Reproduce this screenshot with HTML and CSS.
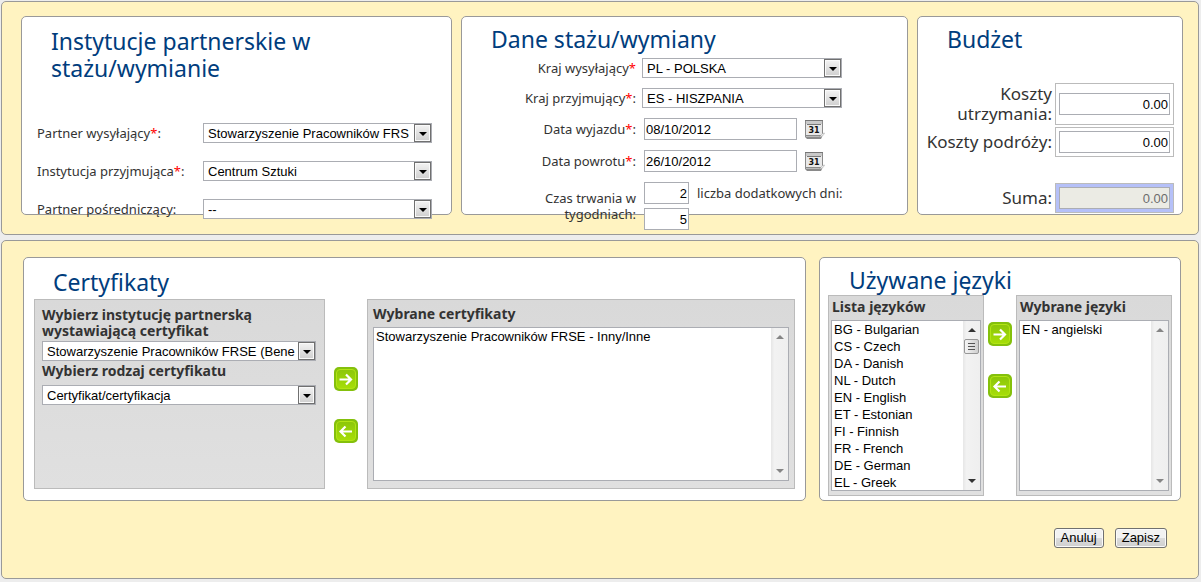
FILE: index.html
```html
<!DOCTYPE html>
<html lang="pl">
<head>
<meta charset="utf-8">
<title>Staż / wymiana</title>
<link rel="stylesheet" href="styles.css">
</head>
<body>
<svg class="defs" aria-hidden="true">
  <defs>
    <linearGradient id="green" x1="0" y1="0" x2="0" y2="1">
      <stop offset="0" stop-color="#8cc60a"/><stop offset="1" stop-color="#a6de08"/>
    </linearGradient>
    <symbol id="tile" viewBox="0 0 24 24">
      <rect width="24" height="24" rx="5" fill="#84c00c"/>
      <rect x="2.5" y="2.5" width="19" height="19" rx="3.5" fill="url(#green)" stroke="#b2e414"/>
    </symbol>
    <symbol id="right" viewBox="0 0 24 24">
      <use href="#tile"/>
      <path d="M5.5 12.5H17M12 7.5l5 5-5 5" fill="none" stroke="#fff" stroke-width="2.2"/>
    </symbol>
    <symbol id="left" viewBox="0 0 24 24">
      <use href="#tile"/>
      <path d="M18 12.5H6.5M11.500 7.500l-5 5 5 5" fill="none" stroke="#fff" stroke-width="2.2"/>
    </symbol>
    <symbol id="calendar" viewBox="0 0 20 19">
      <path d="M0 0h18v13l-1 4-1 2H2l-2-2z" fill="#8a8a8a"/>
      <path d="M1 1h16v14H1z" fill="#e9e9e9"/>
      <path d="M1 1h16v3H1z" fill="#c9c9c9"/>
      <path d="M0 0h18v1H0zM2 4h14v1H2z" fill="#777"/>
      <path d="M1 16h15v1H1z" fill="#bbb"/>
      <path d="M14 17c2 0 2-4 5.500-4-1 2-2 4-5.500 4z" fill="#f4f4f4" stroke="#999" stroke-width=".5"/>
      <text x="9" y="13" class="cal-day">31</text>
    </symbol>
    <symbol id="up" viewBox="0 0 8 4"><path d="M0 4l4-4 4 4z" fill="currentColor"/></symbol>
    <symbol id="down" viewBox="0 0 8 4"><path d="M0 0l4 4 4-4z" fill="currentColor"/></symbol>
  </defs>
</svg>

<form class="page">
  <section class="panel panel-top">
    <div class="card">
      <h2 class="title">Instytucje partnerskie w stażu/wymianie</h2>
      <div class="partners">
        <label for="p1">Partner wysyłający<b class="req">*</b>:</label>
        <span class="select"><select id="p1"><option>Stowarzyszenie Pracowników FRS</option></select></span>
        <label for="p2">Instytucja przyjmująca<b class="req">*</b>:</label>
        <span class="select"><select id="p2"><option>Centrum Sztuki</option></select></span>
        <label for="p3">Partner pośredniczący:</label>
        <span class="select"><select id="p3"><option>--</option></select></span>
      </div>
    </div>

    <div class="card card-raised">
      <h2 class="title">Dane stażu/wymiany</h2>
      <div class="details">
        <div class="row"><label for="k1">Kraj wysyłający<b class="req">*</b></label>
          <span class="select country"><select id="k1"><option>PL - POLSKA</option></select></span></div>
        <div class="row"><label for="k2">Kraj przyjmujący<b class="req">*</b>:</label>
          <span class="select country"><select id="k2"><option>ES - HISZPANIA</option></select></span></div>
        <div class="row"><label for="d1">Data wyjazdu<b class="req">*</b>:</label>
          <span class="field"><input class="date" id="d1" value="08/10/2012">
          <button type="button" class="icon-btn" aria-label="Kalendarz wyjazdu"><svg width="20" height="19"><use href="#calendar"/></svg></button></span></div>
        <div class="row"><label for="d2">Data powrotu<b class="req">*</b>:</label>
          <span class="field"><input class="date" id="d2" value="26/10/2012">
          <button type="button" class="icon-btn" aria-label="Kalendarz powrotu"><svg width="20" height="19"><use href="#calendar"/></svg></button></span></div>
        <div class="row"><label for="w1">Czas trwania w tygodniach:</label>
          <span class="duration"><input class="num" id="w1" value="2">
          <label for="w2">liczba dodatkowych dni:</label><input class="num" id="w2" value="5"></span></div>
      </div>
    </div>

    <div class="card card-raised">
      <h2 class="title">Budżet</h2>
      <div class="budget">
        <label for="b1">Koszty utrzymania:</label>
        <span class="money"><input id="b1" value="0.00"></span>
        <label for="b2">Koszty podróży:</label>
        <span class="money"><input id="b2" value="0.00"></span>
        <label for="b3" class="sum">Suma:</label>
        <span class="money money-sum sum"><input id="b3" value="0.00" disabled></span>
      </div>
    </div>
  </section>

  <section class="panel panel-bottom">
    <div class="lower">
      <div class="card">
        <h2 class="title">Certyfikaty</h2>
        <div class="certs">
          <div class="box picker">
            <label for="c1">Wybierz instytucję partnerską wystawiającą certyfikat</label>
            <span class="select"><select id="c1"><option>Stowarzyszenie Pracowników FRSE (Bene</option></select></span>
            <label for="c2">Wybierz rodzaj certyfikatu</label>
            <span class="select second"><select id="c2"><option>Certyfikat/certyfikacja</option></select></span>
          </div>
          <div class="arrows arrows-low">
            <button type="button" class="icon-btn" aria-label="Dodaj certyfikat"><svg width="24" height="24"><use href="#right"/></svg></button>
            <button type="button" class="icon-btn" aria-label="Usuń certyfikat"><svg width="24" height="24"><use href="#left"/></svg></button>
          </div>
          <div class="box chosen">
            <label for="c3">Wybrane certyfikaty</label>
            <div class="listbox">
              <select id="c3" size="9" multiple><option>Stowarzyszenie Pracowników FRSE - Inny/Inne</option></select>
              <span class="scroll idle"><svg width="8" height="4"><use href="#up"/></svg><svg width="8" height="4"><use href="#down"/></svg></span>
            </div>
          </div>
        </div>
      </div>

      <div class="card card-raised">
        <h2 class="title">Używane języki</h2>
        <div class="langs">
          <div class="box lang">
            <label for="l1">Lista języków</label>
            <div class="listbox">
              <select id="l1" size="10" multiple>
                <option>BG - Bulgarian</option><option>CS - Czech</option><option>DA - Danish</option><option>NL - Dutch</option><option>EN - English</option><option>ET - Estonian</option><option>FI - Finnish</option><option>FR - French</option><option>DE - German</option><option>EL - Greek</option>
              </select>
              <span class="scroll"><svg width="8" height="4"><use href="#up"/></svg><i class="thumb"></i><svg width="8" height="4"><use href="#down"/></svg></span>
            </div>
          </div>
          <div class="arrows">
            <button type="button" class="icon-btn" aria-label="Dodaj język"><svg width="24" height="24"><use href="#right"/></svg></button>
            <button type="button" class="icon-btn" aria-label="Usuń język"><svg width="24" height="24"><use href="#left"/></svg></button>
          </div>
          <div class="box lang">
            <label for="l2">Wybrane języki</label>
            <div class="listbox">
              <select id="l2" size="10" multiple><option>EN - angielski</option></select>
              <span class="scroll idle"><svg width="8" height="4"><use href="#up"/></svg><svg width="8" height="4"><use href="#down"/></svg></span>
            </div>
          </div>
        </div>
      </div>
    </div>
    <div class="actions">
      <button type="button" class="btn">Anuluj</button>
      <button type="submit" class="btn">Zapisz</button>
    </div>
  </section>
</form>
</body>
</html>
```
FILE: styles.css
```css
*, *::before { box-sizing: border-box; }

body {
  margin: 0;
  background: #ededed;
  color: #333;
  font: 13px/16px "Noto Sans", sans-serif;
}

.defs { position: absolute; width: 0; height: 0; }
svg { display: block; }

input, select, button {
  margin: 0;
  color: #000;
  font: 13px/16px "Liberation Sans", Arial, sans-serif;
}

.page {
  display: flex;
  flex-direction: column;
  gap: 5px;
  padding: 1px 2px 3px 1px;
}

.panel {
  border: 1px solid #999;
  border-radius: 5px;
  background: #fff3c1;
}
.panel-top {
  display: grid;
  grid-template-columns: 431fr 447fr 266fr;
  gap: 9px;
  padding: 14px 15px 19px 19px;
}
.panel-bottom { padding: 16px 17px 30px 21px; }
.lower {
  display: grid;
  grid-template-columns: 783fr 362fr;
  gap: 13px;
}

.card {
  min-width: 0;
  padding-top: 11px;
  border: 1px solid #999;
  border-radius: 5px;
  background: #fff;
}
.card-raised { padding-top: 9px; }

.title {
  margin: 0 90px 0 29px;
  color: #003d7d;
  font-size: 23px;
  font-weight: 400;
  line-height: 27px;
}

.req { color: #f00; font-weight: 400; }

/* Drop-down lists */
.select {
  position: relative;
  display: block;
  height: 20px;
  border: 1px solid #abadb3;
  background: #fff;
}
.select select {
  display: block;
  width: 100%;
  height: 18px;
  padding: 1px 17px 0 4px;
  border: 0;
  background: none;
  appearance: none;
}
.select::before {
  content: "";
  position: absolute;
  top: 0;
  right: 0;
  width: 17px;
  height: 18px;
  border: 1px solid #707070;
  background: linear-gradient(#f3f3f3, #cfcfcf);
  box-shadow: inset 0 0 0 1px #fafafa;
  pointer-events: none;
}
.select::after {
  content: "";
  position: absolute;
  top: 8px;
  right: 4px;
  border: solid transparent;
  border-width: 4px 4px 0;
  border-top-color: #000;
  pointer-events: none;
}

/* Partner institutions */
.partners {
  display: grid;
  grid-template-columns: 166px 1fr;
  row-gap: 18px;
  align-items: center;
  margin: 41px 19px -8px 15px;
}

/* Placement details */
.details {
  display: flex;
  flex-direction: column;
  gap: 10px;
  margin: 5px 0 -18px;
}
.row {
  display: grid;
  grid-template-columns: 174px 1fr;
  column-gap: 6px;
  align-items: center;
}
.row > label { padding-left: 50px; text-align: right; }
.country { width: 200px; }
.field {
  display: flex;
  align-items: center;
  gap: 8px;
  padding-left: 2px;
}
.date, .num {
  height: 22px;
  padding: 0 1px;
  border: 1px solid #abadb3;
  background: #fff;
}
.date { width: 153px; }
.num { width: 45px; text-align: right; }
.duration {
  display: grid;
  grid-template-columns: 45px 1fr;
  gap: 4px 8px;
  align-items: center;
  padding-left: 2px;
}

.icon-btn {
  padding: 0;
  border: 0;
  background: none;
}
.cal-day {
  fill: #111;
  font: bold 8px "DejaVu Sans", sans-serif;
  text-anchor: middle;
}

/* Budget */
.budget {
  display: grid;
  grid-template-columns: 1fr 119px;
  gap: 2px 3px;
  align-items: center;
  margin: 30px 8px 1px;
  font-size: 17px;
  line-height: 20px;
  text-align: right;
}
.budget label { margin-left: -4px; }
.money {
  display: flex;
  align-items: center;
  align-self: stretch;
  min-height: 30px;
  padding: 3px;
  border: 1px solid #bbb;
}
.budget .money:nth-child(2) { min-height: 42px; }
.money input {
  width: 100%;
  height: 22px;
  padding: 0 1px;
  border: 1px solid #abadb3;
  background: #fff;
  text-align: right;
}
.money-sum { background: #b5c0f8; }
.money-sum input { background: #ebebe4; color: #6d6d6d; }
.sum { margin-top: 24px; }

/* Grey boxes with lists */
.box {
  border: 1px solid #bbb;
  background: linear-gradient(#d9d9d9, #e0e0e0);
}
.box label {
  display: block;
  font-size: 14px;
  font-weight: 700;
}

.certs {
  display: grid;
  grid-template-columns: 291fr 24px 428fr;
  margin: 3px 10px 11px;
  column-gap: 9px;
}
.picker { padding: 7px 8px 0 7px; }
.picker .select { margin: 2px 0; }
.picker .second { margin-top: 6px; }
.chosen { padding: 6px 5px 7px; }
.chosen .listbox { height: 154px; margin-top: 5px; }

.arrows {
  display: flex;
  flex-direction: column;
  gap: 28px;
  padding-top: 27px;
}
.arrows-low { padding-top: 68px; }

.langs {
  display: grid;
  grid-template-columns: 1fr 24px 1fr;
  column-gap: 4px;
  margin: 1px 8px 4px;
}
.lang { padding: 3px 2px 4px; }
.lang label { padding-left: 1px; }
.lang .listbox { height: 171px; margin-top: 5px; }

.listbox {
  display: flex;
  border: 1px solid #abadb3;
  background: #fff;
}
.listbox select {
  flex: 1;
  min-width: 0;
  height: 100%;
  padding: 0;
  border: 0;
  background: none;
  overflow: hidden;
}
.listbox option { height: 17px; min-height: 17px; padding: 1px 2px 0; }

.scroll {
  display: flex;
  flex-direction: column;
  align-items: center;
  justify-content: space-between;
  width: 17px;
  padding: 7px 0;
  background: linear-gradient(90deg, #e6e6e6, #f2f2f2 20%, #efefef);
}
.scroll.idle { color: #858585; }
.thumb {
  width: 15px;
  height: 15px;
  margin: 7px 0 auto;
  border: 1px solid #979797;
  border-radius: 2px;
  background:
    repeating-linear-gradient(#555 0 1px, transparent 1px 3px) 3px 3px / 7px 7px no-repeat,
    linear-gradient(90deg, #f5f5f5, #cfcfcf);
}

.actions {
  display: flex;
  justify-content: flex-end;
  gap: 11px;
  margin: 27px 14px 0 0;
}
.btn {
  height: 20px;
  padding: 0 6px;
  border: 1px solid #707070;
  border-radius: 3px;
  background: linear-gradient(#f2f2f2 0 50%, #dcdcdc 50%, #cfcfcf);
  box-shadow: inset 0 0 0 1px #fafafa;
}
```
